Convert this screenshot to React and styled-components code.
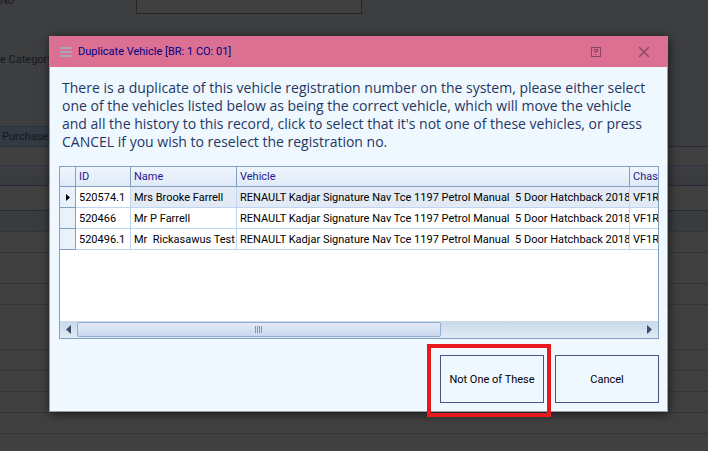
import React from "react";
import styled, { createGlobalStyle } from "styled-components";

const GlobalStyle = createGlobalStyle`
  * {
    box-sizing: border-box;
  }
  body {
    margin: 0;
    background: #404040;
    font-family: Roboto, "Noto Sans", sans-serif;
    font-size: 11px;
    line-height: 13px;
  }
  button {
    font: inherit;
    color: inherit;
    padding: 0;
    border: 0;
    background: none;
  }
`;

const Screen = styled.div`
  position: relative;
  min-height: 100vh;
  overflow: hidden;
`;

/* dimmed form behind the dialog */
const Backdrop = styled.div`
  position: absolute;
  inset: 0;
  display: flex;
  flex-direction: column;
  background: #404040;
  color: #15181d;
  overflow: hidden;
`;

const BackForm = styled.div`
  height: 126px;
  flex: none;
  display: flex;
  flex-direction: column;
  gap: 39px;
  background: #3d3e40;
`;

const BackField = styled.label`
  height: 14px;
  display: flex;
  align-items: flex-start;
  justify-content: space-between;
  width: 362px;
`;

const BackLabel = styled.span`
  line-height: 13px;
  margin-top: ${(p) => p.$top || 0}px;
`;

const BackInput = styled.input`
  width: 226px;
  height: 14px;
  border: 1px solid #262626;
  border-top: 0;
  background: #404040;
`;

const BackTabs = styled.div`
  flex: none;
  height: 21px;
  background: #3d3e40;
  border-bottom: 1px solid #262e39;
`;

const BackTab = styled.button`
  height: 21px;
  padding: 0 8px 0 2px;
  background: #333a43;
  border: 1px solid #29323e;
  border-left: 0;
`;

const BackRow = styled.div`
  flex: none;
  height: ${(p) => p.$h}px;
  background: ${(p) => p.$bg || "#404040"};
  border-bottom: 1px solid ${(p) => p.$line || "#303640"};
`;

const Layer = styled.main`
  position: relative;
  padding: 36px 40px 39px 49px;
`;

const Dialog = styled.section`
  display: flex;
  flex-direction: column;
  background: #eff7ff;
  border: 1px solid #999da2;
  border-top: 0;
  box-shadow: 1px 2px 10px rgba(0, 0, 0, 0.6);
`;

const TitleBar = styled.header`
  display: flex;
  align-items: center;
  height: 31px;
  margin: 0 -1px;
  padding: 0 13px 0 11px;
  background: #db7093;
  color: #000080;
`;

const Title = styled.h1`
  flex: 1;
  margin: 0 0 0 6px;
  font-size: 11px;
  font-weight: normal;
`;

const TitleButton = styled.button`
  display: flex;
  align-items: center;
  justify-content: center;
  width: 22px;
  height: 22px;
  margin-left: ${(p) => p.$gap || 0}px;
`;

const Message = styled.p`
  margin: 0;
  padding: 12px 14px 15px 12px;
  font-family: "Open Sans", "Noto Sans", sans-serif;
  font-size: 14px;
  line-height: 18px;
  color: #1f3763;
`;

const Grid = styled.div`
  margin: 0 8px 0 9px;
  border: 1px solid #829fc4;
  background: #fff;
`;

const GridView = styled.div`
  min-height: 154px;
  overflow: hidden;
`;

const Table = styled.table`
  table-layout: fixed;
  width: 900px;
  border-spacing: 0;
  white-space: pre;
`;

const Head = styled.th`
  height: 20px;
  padding: 0 0 1px 3px;
  text-align: left;
  font-weight: normal;
  color: #1f1a8c;
  background: linear-gradient(#eff5fd, #e0eaf7);
  border-right: 1px solid #829fc4;
  border-bottom: 1px solid #829fc4;
`;

const Cell = styled.td`
  height: 21px;
  padding: 0 0 0 3px;
  overflow: hidden;
  color: #000;
  background: ${(p) => (p.$selected ? "#e1eaf5" : "#fff")};
  border-right: 1px solid #bfd5f2;
  border-bottom: 1px solid #bfd5f2;
`;

const Indicator = styled.td`
  height: 21px;
  padding: 0 0 0 6px;
  background: #e9f1fb;
  border-right: 1px solid #829fc4;
  border-bottom: 1px solid #829fc4;

  svg {
    display: block;
  }
`;

const ScrollBar = styled.div`
  display: flex;
  height: 17px;
  background: linear-gradient(#c9d9e9, #e0eaf5);
`;

const ScrollArrow = styled.button`
  display: flex;
  align-items: center;
  justify-content: center;
  width: 17px;
`;

const ScrollTrack = styled.div`
  flex: 1;
  padding: 1px 0;
`;

const ScrollThumb = styled.div`
  display: flex;
  align-items: center;
  justify-content: center;
  gap: 1px;
  width: 64.5%;
  height: 15px;
  border: 1px solid #92add0;
  border-radius: 2px;
  background: linear-gradient(#e4ebf6, #c8d8ed);
`;

const Grip = styled.i`
  width: 1px;
  height: 7px;
  background: #7f99be;
`;

const Footer = styled.footer`
  display: flex;
  justify-content: flex-end;
  gap: 11px;
  padding: 16px 8px 8px;
`;

const Marked = styled.div`
  position: relative;
`;

const Marker = styled.span`
  position: absolute;
  inset: -11px -7px -14px -13px;
  border: 4px solid #e8191c;
  pointer-events: none;
`;

const ActionButton = styled.button`
  display: block;
  width: 104px;
  height: 48px;
  color: #000;
  background: #eff7ff;
  border: 1px solid #4a5188;
`;

const VEHICLE = "RENAULT Kadjar Signature Nav Tce 1197 Petrol Manual  5 Door Hatchback 2018";

const rows = [
  { id: "520574.1", name: "Mrs Brooke Farrell" },
  { id: "520466", name: "Mr P Farrell" },
  { id: "520496.1", name: "Mr  Rickasawus Test" },
];

const backRows = [
  { h: 19 },
  { h: 20, bg: "linear-gradient(#3d3e41, #37393d)", line: "#242c36" },
  { h: 25, line: "#242c36" },
  { h: 21, bg: "#393b3f" },
  { h: 21 },
  { h: 31 },
  { h: 21 },
  { h: 45 },
  { h: 21 },
  { h: 21 },
  { h: 21 },
  { h: 21 },
];

const MenuIcon = () => (
  <svg width="12" height="10" shapeRendering="crispEdges" fill="#a9a5b6">
    <rect width="12" height="2" />
    <rect y="4" width="12" height="2" />
    <rect y="8" width="12" height="2" />
  </svg>
);

const HelpIcon = () => (
  <svg width="10" height="10" shapeRendering="crispEdges" fill="#85465d">
    <path d="M0 0h10v10h-10zM1 1v8h8v-8z" fillRule="evenodd" />
    <path d="M3 2h4v1h-4zM6 3h1v2h-1zM3 3h1v1h-1zM4 4h2v1h-2zM4 5h1v1h-1zM4 7h1v1h-1z" />
  </svg>
);

const CloseIcon = () => (
  <svg width="10" height="10" stroke="#85465d" strokeWidth="1.3">
    <path d="M0 0L10 10M10 0L0 10" />
  </svg>
);

const App = () => (
  <Screen>
    <GlobalStyle />
    <Backdrop>
      <BackForm>
        <BackField>
          <BackLabel $top={-6}>No</BackLabel>
          <BackInput aria-label="Number" />
        </BackField>
        <BackLabel>e Category</BackLabel>
      </BackForm>
      <BackTabs>
        <BackTab>Purchase</BackTab>
      </BackTabs>
      {backRows.map((r, i) => (
        <BackRow key={i} $h={r.h} $bg={r.bg} $line={r.line} />
      ))}
    </Backdrop>
    <Layer>
      <Dialog role="dialog" aria-labelledby="dialog-title">
        <TitleBar>
          <MenuIcon />
          <Title id="dialog-title">Duplicate Vehicle [BR: 1 CO: 01]</Title>
          <TitleButton aria-label="Help">
            <HelpIcon />
          </TitleButton>
          <TitleButton aria-label="Close" $gap={26}>
            <CloseIcon />
          </TitleButton>
        </TitleBar>
        <Message>
          There is a duplicate of this vehicle registration number on the system, please either select one of the
          vehicles listed below as being the correct vehicle, which will move the vehicle and all the history to this
          record, click to select that it's not one of these vehicles, or press CANCEL if you wish to reselect the
          registration no.
        </Message>
        <Grid>
          <GridView>
            <Table>
              <colgroup>
                <col width="16" />
                <col width="55" />
                <col width="106" />
                <col width="393" />
                <col />
              </colgroup>
              <thead>
                <tr>
                  <Head aria-label="Current row" />
                  <Head>ID</Head>
                  <Head>Name</Head>
                  <Head>Vehicle</Head>
                  <Head>Chassis</Head>
                </tr>
              </thead>
              <tbody>
                {rows.map((row, i) => (
                  <tr key={row.id}>
                    <Indicator>
                      {i === 0 && (
                        <svg width="4" height="7">
                          <path d="M0 0L4 3.5L0 7z" />
                        </svg>
                      )}
                    </Indicator>
                    <Cell>{row.id}</Cell>
                    <Cell $selected={i === 0}>{row.name}</Cell>
                    <Cell $selected={i === 0}>{VEHICLE}</Cell>
                    <Cell $selected={i === 0}>VF1RF</Cell>
                  </tr>
                ))}
              </tbody>
            </Table>
          </GridView>
          <ScrollBar>
            <ScrollArrow aria-label="Scroll left">
              <svg width="5" height="9" fill="#3f4a72">
                <path d="M5 0L0 4.5L5 9z" />
              </svg>
            </ScrollArrow>
            <ScrollTrack>
              <ScrollThumb>
                <Grip />
                <Grip />
                <Grip />
                <Grip />
              </ScrollThumb>
            </ScrollTrack>
            <ScrollArrow aria-label="Scroll right">
              <svg width="5" height="9" fill="#3f4a72">
                <path d="M0 0L5 4.5L0 9z" />
              </svg>
            </ScrollArrow>
          </ScrollBar>
        </Grid>
        <Footer>
          <Marked>
            <ActionButton>Not One of These</ActionButton>
            <Marker />
          </Marked>
          <ActionButton>Cancel</ActionButton>
        </Footer>
      </Dialog>
    </Layer>
  </Screen>
);

export default App;
